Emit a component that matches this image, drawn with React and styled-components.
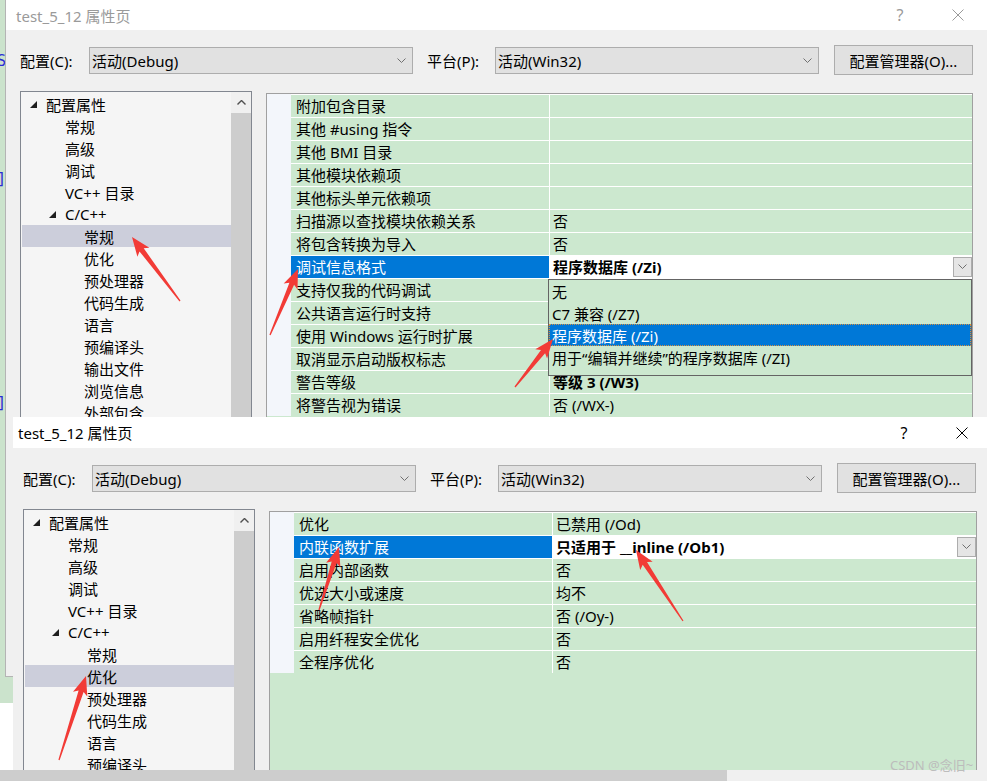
import React from 'react';
import styled, { createGlobalStyle } from 'styled-components';

const GlobalStyle = createGlobalStyle`
  html, body {
    margin: 0;
    padding: 0;
    background: #fff;
    overflow: hidden;
  }
  body {
    font-family: 'Noto Sans', 'Noto Sans CJK SC', sans-serif;
    font-size: 15px;
    color: #000;
  }
`;

const Desktop = styled.div`
  position: relative;
  width: 987px;
  height: 781px;
  overflow: hidden;
  background: #fff;
`;

const EditorStrip = styled.div`
  position: absolute;
  left: 0;
  top: 0;
  width: 13px;
  height: 703px;
  background: #cbe3cc;
  display: flex;
  flex-direction: column;
  overflow: hidden;
`;

const CodeGlyph = styled.span`
  margin-top: ${p => p.$gap}px;
  margin-left: -3px;
  height: 18px;
  line-height: 18px;
  color: #2b2bd6;
  font-family: 'DejaVu Sans Mono', monospace;
  font-size: 15px;
`;

const Window = styled.div`
  position: absolute;
  left: ${p => p.$left}px;
  top: ${p => p.$top}px;
  width: ${p => p.$width}px;
  height: ${p => p.$height}px;
  box-sizing: border-box;
  background: #f0f0f0;
  border-left: ${p => (p.$active ? 'none' : '1px solid #b4b4b4')};
  border-bottom: ${p => (p.$active ? 'none' : '1px solid #b4b4b4')};
  display: flex;
  flex-direction: column;
`;

const TitleBar = styled.div`
  height: ${p => p.$h}px;
  flex-shrink: 0;
  background: #fff;
  display: flex;
  align-items: center;
  padding-left: ${p => p.$pad}px;
  color: ${p => (p.$active ? '#000' : '#9a9a9a')};
`;

const TitleText = styled.div`
  flex: 1;
  white-space: nowrap;
`;

const CaptionButton = styled.div`
  width: 58px;
  height: 100%;
  display: flex;
  align-items: center;
  justify-content: center;
  font-size: 16px;
`;

const Body = styled.div`
  flex: 1;
  min-height: 0;
  display: flex;
  flex-direction: column;
  padding: 15px 14px 14px ${p => p.$pad}px;
`;

const ConfigRow = styled.div`
  height: 30px;
  display: flex;
  align-items: center;
  flex-shrink: 0;
`;

const FieldLabel = styled.div`
  width: ${p => p.$w}px;
  margin-left: ${p => p.$ml || 0}px;
  white-space: nowrap;
`;

const Combo = styled.div`
  width: 324px;
  height: 27px;
  box-sizing: border-box;
  border: 1px solid #adadad;
  background: #e1e1e1;
  display: flex;
  align-items: center;
  padding-left: 2px;
`;

const ComboText = styled.div`
  flex: 1;
  white-space: nowrap;
`;

const ComboArrow = styled.div`
  width: 22px;
  display: flex;
  justify-content: center;
`;

const Button = styled.div`
  width: 139px;
  height: 30px;
  margin-left: 15px;
  box-sizing: border-box;
  border: 1px solid #adadad;
  background: #e1e1e1;
  display: flex;
  align-items: center;
  justify-content: center;
  white-space: nowrap;
`;

const Panes = styled.div`
  flex: 1;
  min-height: 0;
  margin-top: 16px;
  display: flex;
  gap: 14px;
`;

const TreeBox = styled.div`
  width: 232px;
  flex-shrink: 0;
  box-sizing: border-box;
  border: 1px solid #828790;
  background: #f5f5f5;
  display: flex;
  overflow: hidden;
`;

const TreeList = styled.div`
  flex: 1;
  padding: 1px 0 0 1px;
  overflow: hidden;
`;

const TreeRow = styled.div`
  height: 22px;
  display: flex;
  align-items: center;
  padding-left: ${p => p.$indent}px;
  background: ${p => (p.$selected ? '#cccedb' : 'transparent')};
  white-space: nowrap;
`;

const Expander = styled.span`
  width: 16px;
  display: flex;
  align-items: center;
`;

const VScroll = styled.div`
  width: 20px;
  display: flex;
  flex-direction: column;
`;

const ScrollUp = styled.div`
  height: 21px;
  background: #f0f0f0;
  display: flex;
  align-items: center;
  justify-content: center;
`;

const ScrollThumb = styled.div`
  flex: 1;
  background: #cdcdcd;
`;

const GridBox = styled.div`
  flex: 1;
  margin-top: 2px;
  position: relative;
  box-sizing: border-box;
  border: 1px solid #a0a0a0;
  background: #cce8cf;
  overflow: hidden;
`;

const GridRow = styled.div`
  height: 23px;
  display: flex;
`;

const Gutter = styled.div`
  width: 24px;
  flex-shrink: 0;
  background: #f3f6fb;
`;

const NameCell = styled.div`
  width: 259px;
  flex-shrink: 0;
  box-sizing: border-box;
  border-top: 1px solid #fff;
  border-right: 1px solid #fff;
  padding: 0 0 1px 5px;
  display: flex;
  align-items: center;
  white-space: nowrap;
  overflow: hidden;
  background: ${p => (p.$selected ? '#0078d7' : 'transparent')};
  color: ${p => (p.$selected ? '#fff' : '#000')};
`;

const ValueCell = styled.div`
  flex: 1;
  box-sizing: border-box;
  border-top: 1px solid #fff;
  padding: 0 0 1px 3px;
  display: flex;
  align-items: center;
  white-space: nowrap;
  overflow: hidden;
  background: ${p => (p.$editing ? '#fff' : 'transparent')};
  font-weight: ${p => (p.$bold ? 700 : 400)};
`;

const ValueText = styled.div`
  flex: 1;
`;

const DropButton = styled.div`
  width: 19px;
  height: 20px;
  box-sizing: border-box;
  border: 1px solid #adadad;
  background: #e5e5e5;
  display: flex;
  align-items: center;
  justify-content: center;
`;

const Popup = styled.div`
  position: absolute;
  left: 281px;
  top: 185px;
  width: 424px;
  box-sizing: border-box;
  border: 1px solid #646464;
  background: #cce8cf;
  padding-bottom: 7px;
`;

const PopupItem = styled.div`
  height: 22px;
  box-sizing: border-box;
  display: flex;
  align-items: center;
  white-space: nowrap;
  background: ${p => (p.$selected ? '#0078d7' : 'transparent')};
  color: ${p => (p.$selected ? '#fff' : '#000')};
  border: 1px ${p => (p.$selected ? 'dotted #d8913f' : 'solid transparent')};
  padding-left: 2px;
`;

const HScroll = styled.div`
  position: absolute;
  left: 0;
  bottom: 0;
  width: 100%;
  height: 11px;
  background: #f0f0f0;
`;

const HThumb = styled.div`
  width: 727px;
  height: 100%;
  background: #cdcdcd;
`;

const Watermark = styled.div`
  position: absolute;
  left: 890px;
  top: 755px;
  font-size: 13px;
  color: #bcbcbc;
  white-space: nowrap;
`;

const ArrowLayer = styled.svg`
  position: absolute;
  left: 0;
  top: 0;
  pointer-events: none;
`;

const Chevron = ({ up }) => (
  <svg width="9" height="5" viewBox="0 0 9 5">
    <polyline
      points={up ? '0.5,4.5 4.5,0.5 8.5,4.5' : '0.5,0.5 4.5,4.5 8.5,0.5'}
      fill="none"
      stroke={up ? '#505050' : '#707070'}
      strokeWidth={up ? 1.4 : 1}
    />
  </svg>
);

const Triangle = () => (
  <svg width="7" height="7" viewBox="0 0 7 7">
    <polygon points="7,0 7,7 0,7" fill="#1e1e1e" />
  </svg>
);

const CloseIcon = ({ color }) => (
  <svg width="12" height="12" viewBox="0 0 12 12">
    <line x1="0.5" y1="0.5" x2="11.5" y2="11.5" stroke={color} strokeWidth="1" />
    <line x1="11.5" y1="0.5" x2="0.5" y2="11.5" stroke={color} strokeWidth="1" />
  </svg>
);

const treeItems = (selected, count) =>
  [
    { label: '配置属性', level: 0, exp: true },
    { label: '常规', level: 1 },
    { label: '高级', level: 1 },
    { label: '调试', level: 1 },
    { label: 'VC++ 目录', level: 1 },
    { label: 'C/C++', level: 1, exp: true },
    { label: '常规', level: 2, sel: selected === '常规' },
    { label: '优化', level: 2, sel: selected === '优化' },
    { label: '预处理器', level: 2 },
    { label: '代码生成', level: 2 },
    { label: '语言', level: 2 },
    { label: '预编译头', level: 2 },
    { label: '输出文件', level: 2 },
    { label: '浏览信息', level: 2 },
    { label: '外部包含', level: 2 },
  ].slice(0, count);

const topRows = [
  { name: '附加包含目录', value: '' },
  { name: '其他 #using 指令', value: '' },
  { name: '其他 BMI 目录', value: '' },
  { name: '其他模块依赖项', value: '' },
  { name: '其他标头单元依赖项', value: '' },
  { name: '扫描源以查找模块依赖关系', value: '否' },
  { name: '将包含转换为导入', value: '否' },
  { name: '调试信息格式', value: '程序数据库 (/Zi)', sel: true, bold: true },
  { name: '支持仅我的代码调试', value: '' },
  { name: '公共语言运行时支持', value: '' },
  { name: '使用 Windows 运行时扩展', value: '' },
  { name: '取消显示启动版权标志', value: '' },
  { name: '警告等级', value: '等级 3 (/W3)', bold: true },
  { name: '将警告视为错误', value: '否 (/WX-)' },
];

const bottomRows = [
  { name: '优化', value: '已禁用 (/Od)' },
  { name: '内联函数扩展', value: '只适用于 __inline (/Ob1)', sel: true, bold: true },
  { name: '启用内部函数', value: '否' },
  { name: '优选大小或速度', value: '均不' },
  { name: '省略帧指针', value: '否 (/Oy-)' },
  { name: '启用纤程安全优化', value: '否' },
  { name: '全程序优化', value: '否' },
];

const popupItems = ['无', 'C7 兼容 (/Z7)', '程序数据库 (/Zi)', '用于“编辑并继续”的程序数据库 (/ZI)'];

const arrows = [
  [180, 301, 132, 237],
  [270, 335, 298, 269],
  [515, 387, 553, 339],
  [59, 760, 86, 676],
  [319, 610, 339, 547],
  [683, 621, 636, 550],
];

function arrowPoints(x1, y1, x2, y2) {
  const dx = x2 - x1;
  const dy = y2 - y1;
  const len = Math.hypot(dx, dy);
  const ux = dx / len;
  const uy = dy / len;
  const nx = -uy;
  const ny = ux;
  const head = 19;
  const bx = x2 - ux * head;
  const by = y2 - uy * head;
  const nb = 3;
  const pts = [
    [x1 + nx * 0.6, y1 + ny * 0.6],
    [bx + ux * nb + nx * 2.6, by + uy * nb + ny * 2.6],
    [bx + nx * 7.5, by + ny * 7.5],
    [x2, y2],
    [bx - nx * 7.5, by - ny * 7.5],
    [bx + ux * nb - nx * 2.6, by + uy * nb - ny * 2.6],
    [x1 - nx * 0.6, y1 - ny * 0.6],
  ];
  return pts.map(p => p.map(v => v.toFixed(1)).join(',')).join(' ');
}

const Tree = ({ selected, count }) => (
  <TreeBox>
    <TreeList>
      {treeItems(selected, count).map((item, i) => (
        <TreeRow
          key={i}
          $selected={item.sel}
          $indent={item.exp ? 8 + 19 * item.level : 24 + 19 * item.level}
        >
          {item.exp && (
            <Expander>
              <Triangle />
            </Expander>
          )}
          {item.label}
        </TreeRow>
      ))}
    </TreeList>
    <VScroll>
      <ScrollUp>
        <Chevron up />
      </ScrollUp>
      <ScrollThumb />
    </VScroll>
  </TreeBox>
);

const PropertyGrid = ({ rows, popup }) => (
  <GridBox>
    {rows.map((row, i) => (
      <GridRow key={i}>
        <Gutter />
        <NameCell $selected={row.sel}>{row.name}</NameCell>
        <ValueCell $editing={row.sel} $bold={row.bold}>
          <ValueText>{row.value}</ValueText>
          {row.sel && (
            <DropButton>
              <Chevron />
            </DropButton>
          )}
        </ValueCell>
      </GridRow>
    ))}
    {popup && (
      <Popup>
        {popupItems.map((item, i) => (
          <PopupItem key={i} $selected={i === 2}>
            {item}
          </PopupItem>
        ))}
      </Popup>
    )}
  </GridBox>
);

const PropertyDialog = ({
  left, top, width, height, titleH, titlePad, bodyPad, active, selected, treeCount, rows, popup,
}) => (
  <Window $left={left} $top={top} $width={width} $height={height} $active={active}>
    <TitleBar $h={titleH} $pad={titlePad} $active={active}>
      <TitleText>test_5_12 属性页</TitleText>
      <CaptionButton>?</CaptionButton>
      <CaptionButton>
        <CloseIcon color={active ? '#000' : '#9a9a9a'} />
      </CaptionButton>
    </TitleBar>
    <Body $pad={bodyPad}>
      <ConfigRow>
        <FieldLabel $w={69}>配置(C):</FieldLabel>
        <Combo>
          <ComboText>活动(Debug)</ComboText>
          <ComboArrow>
            <Chevron />
          </ComboArrow>
        </Combo>
        <FieldLabel $w={68} $ml={14}>平台(P):</FieldLabel>
        <Combo>
          <ComboText>活动(Win32)</ComboText>
          <ComboArrow>
            <Chevron />
          </ComboArrow>
        </Combo>
        <Button>配置管理器(O)...</Button>
      </ConfigRow>
      <Panes>
        <Tree selected={selected} count={treeCount} />
        <PropertyGrid rows={rows} popup={popup} />
      </Panes>
    </Body>
  </Window>
);

export default function App() {
  return (
    <Desktop>
      <GlobalStyle />
      <EditorStrip>
        <CodeGlyph $gap={52}>S</CodeGlyph>
        <CodeGlyph $gap={100}>]</CodeGlyph>
        <CodeGlyph $gap={206}>]</CodeGlyph>
      </EditorStrip>
      <PropertyDialog
        left={5}
        top={0}
        width={982}
        height={677}
        titleH={30}
        titlePad={10}
        bodyPad={14}
        active={false}
        selected="常规"
        treeCount={15}
        rows={topRows}
        popup
      />
      <PropertyDialog
        left={13}
        top={417}
        width={978}
        height={420}
        titleH={31}
        titlePad={5}
        bodyPad={10}
        active
        selected="优化"
        treeCount={12}
        rows={bottomRows}
      />
      <HScroll>
        <HThumb />
      </HScroll>
      <Watermark>CSDN @念旧~</Watermark>
      <ArrowLayer width="987" height="781" viewBox="0 0 987 781">
        {arrows.map((a, i) => (
          <polygon key={i} points={arrowPoints(...a)} fill="#f23b36" />
        ))}
      </ArrowLayer>
    </Desktop>
  );
}
